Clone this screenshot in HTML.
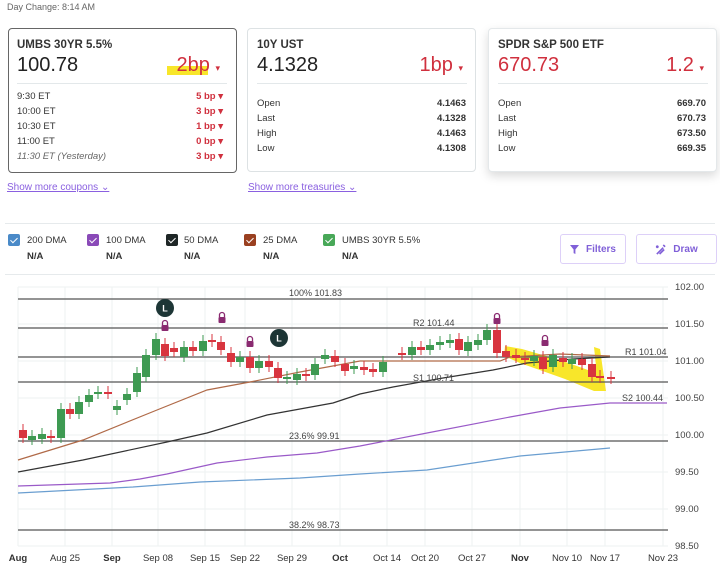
<!DOCTYPE html>
<html><head><meta charset="utf-8"><style>
*{margin:0;padding:0;box-sizing:border-box}
body{width:720px;height:578px;background:#fff;font-family:"Liberation Sans",sans-serif;color:#222;position:relative;overflow:hidden}
.a{position:absolute;white-space:nowrap}
.card{position:absolute;background:#fff;border-radius:4px}
.t{font-size:11.5px;font-weight:bold;color:#333}
.big{font-size:20px;color:#222}
.red{color:#d0303e}
.row{font-size:9.5px;color:#333}
.rv{font-size:9.5px;font-weight:bold;color:#333;text-align:right}
.sm{font-size:10px;color:#8a60e0;text-decoration:underline}
.cb{position:absolute;width:12px;height:12px;border-radius:2px;top:234px}
.cb:after{content:"";position:absolute;left:4px;top:1.5px;width:3px;height:6px;border:solid #fff;border-width:0 1.5px 1.5px 0;transform:rotate(45deg)}
.lg{position:absolute;top:235px;font-size:9.5px;color:#333}
.na{position:absolute;top:251px;font-size:9.5px;font-weight:bold;color:#333}
.btn{position:absolute;top:234px;height:30px;border:1.5px solid #ddd0f8;border-radius:3px;font-size:10px;font-weight:bold;color:#8060d8;display:flex;align-items:center;justify-content:center;gap:7px}
</style></head><body>
<div class="a" style="left:7px;top:2px;font-size:9px;color:#666">Day Change: 8:14 AM</div>

<div class="card" style="left:8px;top:28px;width:229px;height:145px;border:1.5px solid #666"></div>
<div class="a t" style="left:17px;top:39px">UMBS 30YR 5.5%</div>
<div class="a big" style="left:17px;top:54px">100.78</div>
<div class="a" style="left:167px;top:66px;width:41px;height:9px;background:#f8e62a"></div>
<div class="a big red" style="right:500px;top:54px">2bp <span style="font-size:9px">▾</span></div>
<div class="a" style="left:17px;top:83px;width:210px;height:1px;background:#e3e8ea"></div>
<div class="a row" style="left:17px;top:89px;line-height:15px">9:30 ET<br>10:00 ET<br>10:30 ET<br>11:00 ET<br><i style="color:#666">11:30 ET (Yesterday)</i></div>
<div class="a rv red" style="left:170px;top:89px;line-height:15px;color:#d0303e;width:53px">5 bp ▾<br>3 bp ▾<br>1 bp ▾<br>0 bp ▾<br>3 bp ▾</div>
<div class="a sm" style="left:7px;top:182px">Show more coupons ⌄</div>

<div class="card" style="left:247px;top:28px;width:229px;height:144px;border:1px solid #dde2e4"></div>
<div class="a t" style="left:257px;top:39px">10Y UST</div>
<div class="a big" style="left:257px;top:54px">4.1328</div>
<div class="a big red" style="right:257px;top:54px">1bp <span style="font-size:9px">▾</span></div>
<div class="a" style="left:257px;top:83px;width:210px;height:1px;background:#e3e8ea"></div>
<div class="a row" style="left:257px;top:96px;line-height:15px">Open<br>Last<br>High<br>Low</div>
<div class="a rv" style="left:400px;top:96px;line-height:15px;width:66px">4.1463<br>4.1328<br>4.1463<br>4.1308</div>
<div class="a sm" style="left:248px;top:182px">Show more treasuries ⌄</div>

<div class="card" style="left:488px;top:28px;width:229px;height:144px;border:1px solid #e4e8ea;box-shadow:0 4px 10px rgba(0,0,0,.15)"></div>
<div class="a t" style="left:498px;top:39px">SPDR S&amp;P 500 ETF</div>
<div class="a big red" style="left:498px;top:54px">670.73</div>
<div class="a big red" style="right:16px;top:54px">1.2 <span style="font-size:9px">▾</span></div>
<div class="a" style="left:498px;top:83px;width:210px;height:1px;background:#e3e8ea"></div>
<div class="a row" style="left:498px;top:96px;line-height:15px">Open<br>Last<br>High<br>Low</div>
<div class="a rv" style="left:640px;top:96px;line-height:15px;width:66px">669.70<br>670.73<br>673.50<br>669.35</div>

<div class="a" style="left:5px;top:223px;width:710px;height:1px;background:#e6eaec"></div>
<div class="cb" style="left:8px;background:#4a8ac8"></div><div class="lg" style="left:27px">200 DMA</div><div class="na" style="left:27px">N/A</div>
<div class="cb" style="left:87px;background:#8a4ab8"></div><div class="lg" style="left:106px">100 DMA</div><div class="na" style="left:106px">N/A</div>
<div class="cb" style="left:166px;background:#1e2626"></div><div class="lg" style="left:184px">50 DMA</div><div class="na" style="left:184px">N/A</div>
<div class="cb" style="left:244px;background:#9a4020"></div><div class="lg" style="left:263px">25 DMA</div><div class="na" style="left:263px">N/A</div>
<div class="cb" style="left:323px;background:#48a858"></div><div class="lg" style="left:342px">UMBS 30YR 5.5%</div><div class="na" style="left:342px">N/A</div>
<div class="btn" style="left:560px;width:66px"><svg width="9" height="9" viewBox="0 0 10 10"><path d="M0 0H10L6 5V10L4 9V5Z" fill="#8060d8"/></svg>Filters</div>
<div class="btn" style="left:636px;width:81px"><svg width="11" height="11" viewBox="0 0 12 12"><path d="M2 11L9 4M5 11L10 6M1 3h3M2.5 1.5v3M9 1l2 2" stroke="#8060d8" stroke-width="1.8" fill="none"/></svg>Draw</div>
<div class="a" style="left:5px;top:274px;width:710px;height:1px;background:#e6eaec"></div>

<svg id="ch" class="a" style="left:0;top:0" width="720" height="578" font-family="Liberation Sans, sans-serif"></svg>
<script>
var s='';
function L(x1,y1,x2,y2,c,w){s+='<line x1="'+x1+'" y1="'+y1+'" x2="'+x2+'" y2="'+y2+'" stroke="'+c+'" stroke-width="'+(w||1)+'"/>';}
function T(x,y,t,o){s+='<text x="'+x+'" y="'+y+'" '+(o||'')+'>'+t+'</text>';}
var xs=[18,65,112,158,205,245,292,340,387,425,472,520,567,605,663];
xs.forEach(function(x){L(x,287,x,546,'#eef2f2');});
[287,324,361,398,435,472,509,546].forEach(function(y){L(18,y,668,y,'#eef2f2');});
s+='<polygon points="505,346 522,349 560,360 588,370 596,366 594,347 600,349 606,391 594,391 565,379 520,363 504,356" fill="#f8e62a"/>';
[[299],[328],[357],[382],[441],[530]].forEach(function(a){L(18,a[0],668,a[0],'#555',1.3);});
function P(pts,c){s+='<polyline fill="none" stroke="'+c+'" stroke-width="1.2" points="'+pts+'"/>';}
P('18,493 133,487 200,482 300,478 360,474 427,470 520,456 610,448','#6a9ed0');
P('18,486 110,483 140,479 167,474 217,463 267,457 317,453 360,446 427,433 510,417 560,408 610,403 667,403','#9a5ac8');
P('18,472 83,460 167,442 207,433 267,415 333,403 360,394 393,387 443,378 493,370 527,363 573,359 610,357','#333');
P('18,460 83,440 157,410 207,390 250,382 300,372 360,361 500,361 510,357 560,354 610,356','#b06a48');
var c=[[23,'r',430,438],[32,'g',436,440],[42,'g',434,439],[51,'r',436,438],[61,'g',409,438],[70,'r',409,414],[79,'g',402,414],[89,'g',395,402],[98,'g',392,394],[108,'r',392,394],[117,'g',406,410],[127,'g',394,400],[137,'g',373,392],[146,'g',355,377],[156,'g',339,355],[165,'r',344,356],[174,'r',348,352],[184,'g',347,357],[193,'r',347,351],[203,'g',341,351],[212,'r',340,342],[221,'r',342,350],[231,'r',353,362],[240,'g',357,362],[250,'r',357,368],[259,'g',361,368],[269,'r',361,367],[278,'r',368,378],[287,'g',377,379],[297,'g',374,380],[306,'r',374,376],[315,'g',364,375],[325,'g',355,359],[335,'r',356,362],[345,'r',364,371],[354,'g',366,369],[364,'r',367,370],[373,'r',369,372],[383,'g',362,372],[402,'r',353,355],[412,'g',347,355],[421,'r',347,350],[430,'g',345,350],[440,'g',342,345],[450,'g',340,343],[459,'r',339,350],[468,'g',342,351],[478,'g',340,345],[487,'g',330,340],[497,'r',330,353],[506,'r',351,357],[516,'r',355,358],[525,'r',358,360],[534,'g',356,361],[543,'r',357,369],[553,'g',355,367],[563,'r',358,362],[572,'g',359,364],[582,'r',359,365],[592,'r',364,377],[600,'r',376,378],[611,'r',377,379]];
c.forEach(function(k){var col=k[1]=='r'?'#d8353f':'#3e9a52';L(k[0],k[2]-6,k[0],k[3]+5,col,1);var h=Math.max(k[3]-k[2],1.5);s+='<rect x="'+(k[0]-4)+'" y="'+k[2]+'" width="8" height="'+h+'" fill="'+col+'"/>';});
var g='font-size="9" fill="#444"';
T(289,296,'100% 101.83',g);T(413,326,'R2 101.44',g);T(625,355,'R1 101.04',g);T(413,381,'S1 100.71',g);T(622,401,'S2 100.44',g);T(289,439,'23.6% 99.91',g);T(289,528,'38.2% 98.73',g);
var yl=['102.00','101.50','101.00','100.50','100.00','99.50','99.00','98.50'];
yl.forEach(function(t,i){T(675,290+i*37,t,'font-size="9.5" fill="#444"');});
var xl=['Aug','Aug 25','Sep','Sep 08','Sep 15','Sep 22','Sep 29','Oct','Oct 14','Oct 20','Oct 27','Nov','Nov 10','Nov 17','Nov 23'];
xl.forEach(function(t,i){var b=(t=='Aug'||t=='Sep'||t=='Oct'||t=='Nov');T(xs[i],561,t,'font-size="9.5" text-anchor="middle" fill="#333"'+(b?' font-weight="bold"':''));});
function Lc(x,y){s+='<circle cx="'+x+'" cy="'+y+'" r="9" fill="#1d3636"/>';T(x,y+3.5,'L','font-size="9" font-weight="bold" fill="#fff" text-anchor="middle"');}
Lc(165,308);Lc(279,338);
function K(x,y){s+='<path d="M'+(x-2.5)+' '+(y-1)+'v-2a2.5 2.5 0 0 1 5 0v2" fill="none" stroke="#8a2a70" stroke-width="1.3"/><rect x="'+(x-3.5)+'" y="'+(y-1)+'" width="7" height="6" rx="1" fill="#8a2a70"/>';}
K(165,326);K(222,318);K(250,342);K(497,319);K(545,341);
document.getElementById('ch').innerHTML=s;
</script>
</body></html>
